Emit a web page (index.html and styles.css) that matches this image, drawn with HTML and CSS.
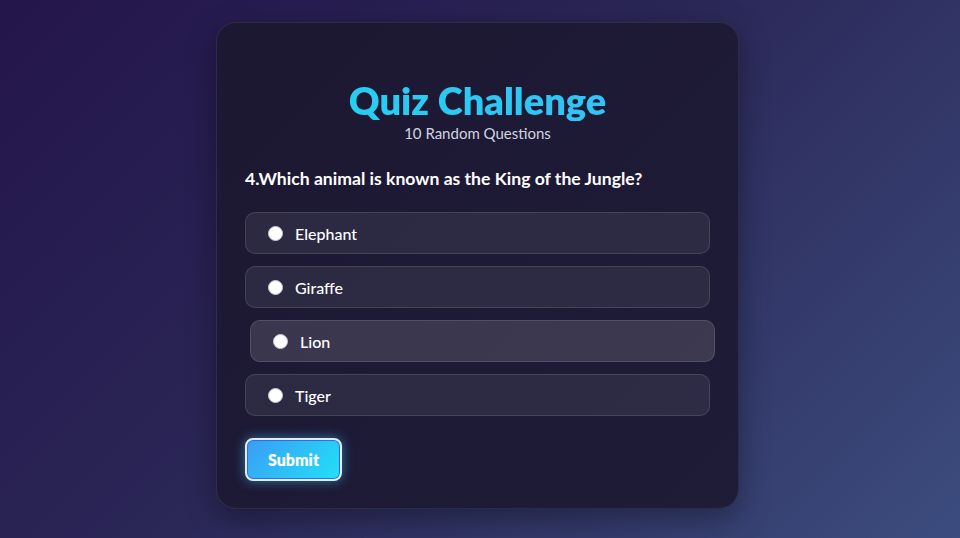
FILE: index.html
```html
<!DOCTYPE html>
<html lang="en">
  <head>
    <meta charset="UTF-8" />
    <meta name="viewport" content="width=device-width, initial-scale=1.0" />
    <title>Quiz Challenge</title>
    <link rel="stylesheet" href="styles.css">
  </head>
  <body>
    <div class="quiz-card">
      <div class="quiz-header">
        <h1>Quiz Challenge</h1>
        <p class="subtitle">10 Random Questions</p>
      </div>
      <h2 class="question">4.Which animal is known as the King of the Jungle?</h2>
      <div class="options">
        <label class="option"><input type="radio" name="answer" /> <span>Elephant</span></label>
        <label class="option"><input type="radio" name="answer" /> <span>Giraffe</span></label>
        <label class="option hover"><input type="radio" name="answer" /> <span>Lion</span></label>
        <label class="option"><input type="radio" name="answer" /> <span>Tiger</span></label>
      </div>
      <button type="button" class="submit-btn">Submit</button>
    </div>
  </body>
</html>
```

FILE: styles.css
```css
* {
  box-sizing: border-box;
}

html,
body {
  height: 100%;
}

body {
  margin: 0;
  padding-right: 5px;
  font-family: Lato, "Noto Sans", Arial, sans-serif;
  background: linear-gradient(135deg, #24154a 0%, #2a2656 45%, #3c4c7e 100%);
  display: flex;
  justify-content: center;
  align-items: flex-start;
  color: #fff;
}

.quiz-card {
  width: 523px;
  height: 487px;
  margin-top: 22px;
  padding: 56px 28px 28px;
  background: linear-gradient(135deg, #1c1832 0%, #1f1c38 100%);
  border: 1px solid rgba(255, 255, 255, 0.08);
  border-radius: 20px;
  box-shadow: 0 10px 30px rgba(0, 0, 0, 0.35);
}

.quiz-header {
  text-align: center;
}

h1 {
  margin: 0;
  font-size: 38px;
  font-weight: 800;
  line-height: 42px;
  background: linear-gradient(90deg, #22d3ee, #38bdf8);
  -webkit-background-clip: text;
  background-clip: text;
  color: transparent;
}

.subtitle {
  margin: 2px 0 0;
  font-size: 15px;
  line-height: 20px;
  color: #d2d3e0;
}

.question {
  margin: 23px 0 0;
  font-size: 17.6px;
  font-weight: 700;
  line-height: 26px;
}

.options {
  display: flex;
  flex-direction: column;
  gap: 12px;
  margin-top: 20px;
}

.option {
  display: flex;
  align-items: center;
  gap: 12px;
  height: 42px;
  padding: 0 22px;
  background: rgba(255, 255, 255, 0.07);
  border: 1px solid rgba(255, 255, 255, 0.12);
  border-radius: 10px;
  font-size: 16px;
  font-weight: 500;
}

.option.hover {
  transform: translateX(5px);
  background: rgba(255, 255, 255, 0.13);
}

.option input {
  appearance: none;
  -webkit-appearance: none;
  width: 15px;
  height: 15px;
  margin: 0;
  border-radius: 50%;
  background: #fff;
  border: 1px solid #c8c8d0;
}

.submit-btn {
  margin-top: 22px;
  width: 97px;
  height: 43px;
  border: 2px solid #e6ecff;
  border-radius: 8px;
  background: linear-gradient(135deg, #3b9cf5, #22e1f7);
  color: #fff;
  font-family: inherit;
  font-size: 16px;
  font-weight: 800;
  box-shadow: 0 0 12px rgba(56, 189, 248, 0.55), inset 0 0 0 1px #2b6fe0;
}
```
